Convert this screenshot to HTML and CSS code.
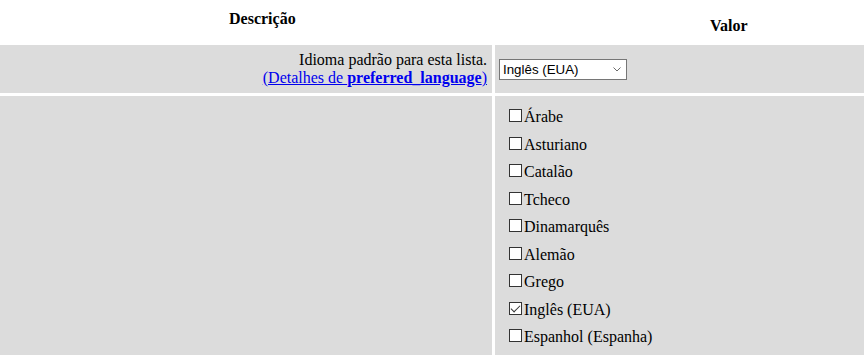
FILE: index.html
```html
<!DOCTYPE html>
<html lang="pt">
<head>
<meta charset="utf-8">
<title>Idioma</title>
<link rel="stylesheet" href="styles.css">
</head>
<body>
<div class="options">
  <div class="head head-desc"><strong>Descrição</strong></div>
  <div class="head head-value"><strong>Valor</strong></div>

  <div class="cell desc">
    <span>Idioma padrão para esta lista.</span>
    <a href="#preferred_language">(Detalhes de <strong>preferred_language</strong>)</a>
  </div>
  <div class="cell value value-select">
    <div class="select-wrap">
      <select class="select">
        <option>Inglês (EUA)</option>
      </select>
      <svg class="chev" width="8" height="5" viewBox="0 0 8 5"><path d="M0.5 0.5 L4 4 L7.5 0.5" fill="none" stroke="#6b6b6b" stroke-width="1"/></svg>
    </div>
  </div>

  <div class="cell desc"></div>
  <div class="cell value">
    <div class="checks">
      <label class="check"><input type="checkbox">Árabe</label>
      <label class="check"><input type="checkbox">Asturiano</label>
      <label class="check"><input type="checkbox">Catalão</label>
      <label class="check"><input type="checkbox">Tcheco</label>
      <label class="check"><input type="checkbox">Dinamarquês</label>
      <label class="check"><input type="checkbox">Alemão</label>
      <label class="check"><input type="checkbox">Grego</label>
      <label class="check"><input type="checkbox" checked>Inglês (EUA)</label>
      <label class="check"><input type="checkbox">Espanhol (Espanha)</label>
    </div>
  </div>
</div>
</body>
</html>
```

FILE: styles.css
```css
html {
  overflow: hidden;
}

body {
  margin: 0;
  background: #ffffff;
  color: #000000;
  font-family: "Liberation Serif", "Times New Roman", serif;
  font-size: 16px;
  line-height: 18px;
}

.options {
  display: grid;
  grid-template-columns: 492px 1fr;
  column-gap: 3px;
  row-gap: 3px;
}

.head {
  height: 42px;
  box-sizing: border-box;
}

.head-desc {
  padding-top: 10px;
  padding-left: 229px;
}

.head-value {
  padding-top: 17px;
  padding-left: 215px;
}

.cell {
  background: #dcdcdc;
}

.desc {
  display: flex;
  flex-direction: column;
  justify-content: center;
  align-items: flex-end;
  text-align: right;
  padding-right: 5px;
  min-height: 48px;
}

.desc a {
  color: #0000ee;
  text-decoration: underline;
}

.value-select {
  display: flex;
  align-items: center;
  padding-left: 4px;
}

.select-wrap {
  position: relative;
  width: 128px;
  height: 21px;
}

.select {
  appearance: none;
  -webkit-appearance: none;
  width: 128px;
  height: 21px;
  margin: 0;
  box-sizing: border-box;
  border: 1px solid #767676;
  border-radius: 0;
  background: #ffffff;
  color: #000000;
  font-family: "Liberation Sans", Arial, sans-serif;
  font-size: 13.33px;
  padding: 0 0 0 3px;
  outline: none;
}

.chev {
  position: absolute;
  right: 6px;
  top: 8px;
  pointer-events: none;
}

.checks {
  display: flex;
  flex-direction: column;
  gap: 9.55px;
  padding: 12px 0 30px 10px;
}

.check {
  display: block;
  height: 18px;
  white-space: nowrap;
}

.check input {
  appearance: none;
  -webkit-appearance: none;
  display: inline-block;
  position: relative;
  width: 13px;
  height: 13px;
  margin: 0 2px 0 4px;
  box-sizing: border-box;
  border: 1px solid #333333;
  border-radius: 0;
  background: #ffffff;
  vertical-align: baseline;
}

.check input:checked::after {
  content: "";
  position: absolute;
  left: 3px;
  top: 0px;
  width: 4px;
  height: 8px;
  border-right: 1.5px solid #333333;
  border-bottom: 1.5px solid #333333;
  transform: rotate(45deg);
}
```
